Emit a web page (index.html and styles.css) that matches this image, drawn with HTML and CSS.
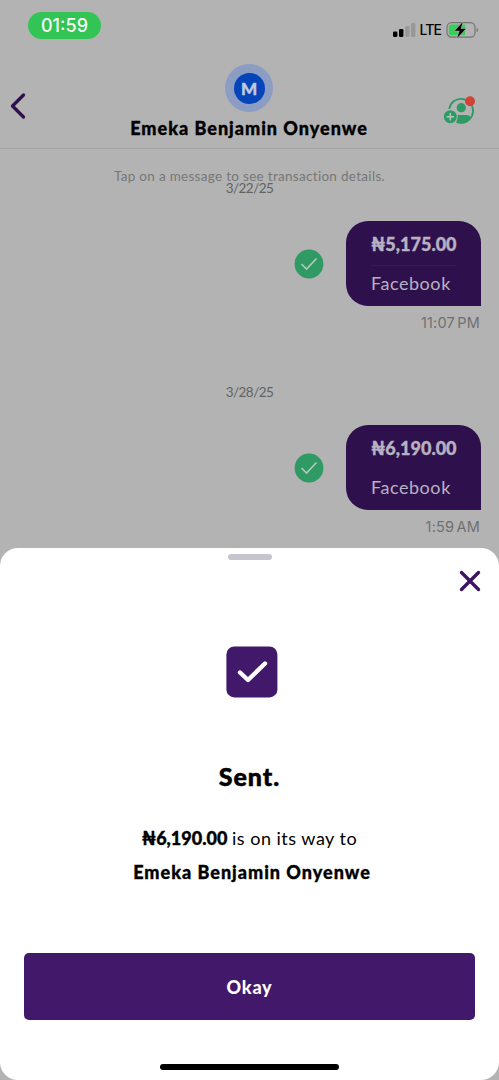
FILE: index.html
```html
<!DOCTYPE html>
<html lang="en">
<head>
<meta charset="utf-8">
<meta name="viewport" content="width=device-width, initial-scale=1">
<title>Transfer sent</title>
<link rel="stylesheet" href="styles.css">
</head>
<body>
<div class="phone">
  <div class="status-bar">
    <span class="clock">01:59</span>
    <div class="indicators">
      <svg class="signal" width="23" height="14" viewBox="0 0 23 14"><rect x="0" y="8.5" width="4.4" height="5.5" rx="1.3"/><rect x="6" y="6" width="4.4" height="8" rx="1.3"/><g fill="#989898"><rect x="12.2" y="3" width="4.4" height="11" rx="1.3"/><rect x="18" y="0" width="4.4" height="14" rx="1.3"/></g></svg>
      <span class="network">LTE</span>
      <svg class="battery" width="33" height="18" viewBox="0 0 33 18"><rect x="1" y="1.7" width="28" height="14.4" rx="4.6" fill="none" stroke="#747474" stroke-width="1.2"/><path d="M30.7 6.5q3 2.4 0 4.8z" fill="#747474"/><path d="M5.5 3.5H19v10.8H5.5Q2.8 14.3 2.8 11.6V6.2Q2.8 3.5 5.5 3.5z" fill="#37cf5a"/><path d="M16.8 1L8.8 9.7h4.8L11.2 17l8.6-9.2h-5.1z" fill="#000" stroke="#b3b3b3" stroke-width="1" paint-order="stroke"/></svg>
    </div>
  </div>
  <header class="header">
    <svg class="back" width="18" height="28" viewBox="0 0 18 28"><path d="M14.5 3L3.5 14l11 11" fill="none" stroke="#2e114c" stroke-width="3.3" stroke-linecap="round" stroke-linejoin="round"/></svg>
    <div class="contact">
      <div class="avatar"><span class="initial">M</span></div>
      <h1 class="contact-name">Emeka Benjamin Onyenwe</h1>
    </div>
    <svg class="add-person" width="34" height="30" viewBox="0 0 34 30"><path d="M6.2 13A12 12 0 1 1 18 26.8" fill="none" stroke="#2e9a64" stroke-width="1.8"/><circle cx="18.3" cy="11.7" r="4.6" fill="#2e9a64"/><path d="M13.8 19h9.6q3.5 0 4.3 2.6Q24.5 27.7 17.8 27.7q-2.3 0-4.5-.8z" fill="#2e9a64"/><circle cx="7.3" cy="20.7" r="7.5" fill="#b3b3b3"/><circle cx="7.3" cy="20.7" r="6.5" fill="#2e9a64"/><path d="M3.6 20.7H11M7.3 17v7.4" stroke="#b8c8be" stroke-width="1.4"/><circle cx="27" cy="5.3" r="5" fill="#d24337"/></svg>
  </header>
  <main class="thread">
    <p class="hint">Tap on a message to see transaction details.</p>
    <p class="date">3/22/25</p>
    <section class="message">
      <svg class="delivered" width="30" height="30" viewBox="0 0 30 30"><circle cx="15" cy="15" r="14.4" fill="#309a64"/><path d="M7.5 15l5 5L22.5 9.5" fill="none" stroke="#b5c9bd" stroke-width="1.6"/></svg>
      <div class="bubble"><strong class="amount">₦5,175.00</strong><span class="note">Facebook</span></div>
    </section>
    <time class="time">11:07 PM</time>
    <p class="date date-later">3/28/25</p>
    <section class="message">
      <svg class="delivered" width="30" height="30" viewBox="0 0 30 30"><circle cx="15" cy="15" r="14.4" fill="#309a64"/><path d="M7.5 15l5 5L22.5 9.5" fill="none" stroke="#b5c9bd" stroke-width="1.6"/></svg>
      <div class="bubble bubble-plain"><strong class="amount">₦6,190.00</strong><span class="note">Facebook</span></div>
    </section>
    <time class="time time-am">1:59 AM</time>
  </main>
  <section class="sheet">
    <div class="grabber"></div>
    <svg class="close" width="22" height="22" viewBox="0 0 22 22"><path d="M2.5 2.5l17 17M19.5 2.5l-17 17" stroke="#3b1562" stroke-width="3.4" stroke-linecap="round"/></svg>
    <svg class="success" width="52" height="52" viewBox="0 0 52 52"><rect x=".4" y=".4" width="51" height="51" rx="8" fill="#42186b"/><path d="M14 26.5l8 7.5 17-16.5" fill="none" stroke="#fff" stroke-width="4.4" stroke-linecap="round" stroke-linejoin="round"/></svg>
    <h2 class="title">Sent.</h2>
    <p class="summary"><strong class="sum">₦6,190.00</strong> <span class="way">is on its way to</span></p>
    <p class="recipient">Emeka Benjamin Onyenwe</p>
    <button class="okay"><span>Okay</span></button>
    <div class="home-indicator"></div>
  </section>
</div>
</body>
</html>
```

FILE: styles.css
```css
* { box-sizing: border-box; }
body { margin: 0; background: #b3b3b3; font-family: Lato, "Noto Sans", sans-serif; color: #000; }
p, h1, h2 { margin: 0; }
svg { display: block; flex: none; }
p, h1, h2, span, strong, time { white-space: nowrap; }
.phone { height: 1080px; display: flex; flex-direction: column; overflow: hidden; background: #b3b3b3; }
.status-bar { height: 64px; flex: none; display: flex; justify-content: space-between; align-items: flex-start; padding: 12px 20px 0 28px; }
.clock { width: 73px; height: 27px; border-radius: 14px; background: #32c455; color: #f5fff7; font: 500 18px/27px Inter, sans-serif; text-align: center; }
.indicators { display: flex; align-items: center; gap: 4px; margin-top: 9px; }
.network { font: 500 14px/18px Inter, sans-serif; letter-spacing: -.9px; margin-right: 1px; }
.header { height: 85px; flex: none; display: flex; justify-content: space-between; border-bottom: 1px solid #a3a3a3; padding: 0 22px 0 9px; }
.back { margin-top: 28px; margin-right: 16px; }
.add-person { margin-top: 32px; }
.contact { width: 260px; margin-left: 76px; margin-right: auto; display: flex; flex-direction: column; align-items: center; }
.avatar { width: 48px; height: 48px; border-radius: 50%; background: #8c9dc4; display: grid; place-items: center; }
.initial { width: 31px; height: 31px; border-radius: 50%; background: #0544b9; color: #c0cbe0; font-size: 17px; font-weight: 900; line-height: 31px; text-align: center; -webkit-text-stroke: .4px; }
.contact-name { font-size: 18px; line-height: 24px; font-weight: 900; margin-top: 4px; letter-spacing: 1px; -webkit-text-stroke: .35px; }
.thread { height: 399px; flex: none; display: flex; flex-direction: column; align-items: stretch; padding: 19px 18px 0 0; }
.hint { color: #777; font-size: 13.5px; line-height: 16px; letter-spacing: .3px; text-align: center; margin-right: -18px; }
.date { color: #626262; font-size: 13.5px; line-height: 16px; letter-spacing: -.55px; text-align: center; margin: -4px -18px 0 0; }
.date-later { margin-top: 51px; }
.message { display: flex; align-items: center; justify-content: flex-end; gap: 22px; margin-top: 25px; }
.bubble { width: 135px; height: 85px; border-radius: 22px 22px 0 22px; background: #2e114c; color: #b9b1c1; padding: 11px 25px 0; }
.amount { display: block; font-size: 18px; line-height: 24px; height: 34px; font-weight: 900; border-bottom: 1px solid #351c51; -webkit-text-stroke: .35px; }
.note { display: block; font-size: 18px; line-height: 24px; margin-top: 5px; letter-spacing: .55px; }
.bubble-plain .amount { border-color: transparent; }
.time { color: #707070; font: 14.5px/20px Inter, sans-serif; word-spacing: -2px; letter-spacing: .2px; margin: 7px 1px 0 0; text-align: right; }
.sheet { height: 532px; flex: none; background: #fff; border-radius: 18px; display: flex; flex-direction: column; align-items: center; padding: 6px 24px 0; }
.grabber { width: 44px; height: 6px; border-radius: 3px; background: #c6c5cd; }
.close { align-self: flex-end; margin: 10px -6px 0 0; }
.success { margin: 54px 0 0 4px; }
.title { font-size: 25px; line-height: 32px; font-weight: 900; margin-top: 62px; letter-spacing: 1px; -webkit-text-stroke: .5px; }
.summary { font-size: 18px; line-height: 24px; margin-top: 34px; }
.sum { font-weight: 900; -webkit-text-stroke: .35px; }
.way { letter-spacing: .5px; }
.recipient { font-size: 18px; line-height: 24px; font-weight: 900; margin: 10px 0 0 5px; letter-spacing: 1px; -webkit-text-stroke: .35px; }
.okay { width: 451px; height: 67px; border: 0; border-radius: 5px; background: #42186b; color: #fff; font: 900 18px/24px Lato, sans-serif; letter-spacing: .8px; margin-top: 69px; padding: 0; flex: none; }
.home-indicator { width: 179px; height: 6px; border-radius: 3px; background: #000; margin-top: 44px; flex: none; }
```
